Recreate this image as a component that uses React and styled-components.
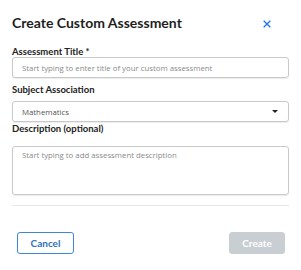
import React from 'react';
import styled, { createGlobalStyle } from 'styled-components';

const GlobalStyle = createGlobalStyle`
  body {
    margin: 0;
    background: #ffffff;
    font-family: Lato, "Liberation Sans", sans-serif;
  }
`

const Card = styled.div`
  width: 301px;
  height: 270px;
  box-sizing: border-box;
  padding: 0 12px;
  background: #fff;
  border-radius: 4px;
`

const Header = styled.div`
  display: flex;
  justify-content: space-between;
  align-items: center;
  height: 47px;
`

const Title = styled.h1`
  margin: 0 0 3px;
  font-size: 14px;
  font-weight: 700;
  color: #1f1f1f;
`

const Close = styled.button`
  border: 0;
  background: none;
  padding: 0;
  margin: 0 18px 0 0;
  display: flex;
  color: #1a73e8;
  cursor: pointer;
`

const Field = styled.div`
  display: flex;
  flex-direction: column;
  margin-top: ${(p) => p.gap || 0}px;
`

const Label = styled.label`
  font-size: 9.5px;
  line-height: 10px;
  font-weight: 700;
  color: #222;
  margin-bottom: ${(p) => p.mb || 0}px;
`

const Input = styled.div`
  box-sizing: border-box;
  height: ${(p) => p.h || 21}px;
  border: 1px solid #c9c9c9;
  border-radius: 3px;
  padding: ${(p) => (p.area ? '3px 9px' : '0 9px')};
  display: flex;
  align-items: ${(p) => (p.area ? 'flex-start' : 'center')};
  justify-content: space-between;
  font-family: "Open Sans", sans-serif;
  font-size: 7.8px;
  color: ${(p) => (p.value ? '#555' : '#8a8a8a')};
  box-shadow: 0 1px 1px rgba(0, 0, 0, 0.08);
`

const Caret = styled.span`
  width: 0;
  height: 0;
  border-left: 3px solid transparent;
  border-right: 3px solid transparent;
  border-top: 3.5px solid #222;
  margin-right: 1px;
`

const Divider = styled.hr`
  border: 0;
  border-top: 1px solid #e6e6e6;
  margin: 10px 0 0;
`

const Footer = styled.div`
  display: flex;
  justify-content: space-between;
  padding: 26px 4px 0 5px;
`

const Button = styled.button`
  box-sizing: border-box;
  width: ${(p) => p.w}px;
  height: 22px;
  border-radius: 3px;
  font-family: Lato, sans-serif;
  font-size: 10px;
  font-weight: 700;
  border: 1px solid ${(p) => (p.primary ? '#c8ced1' : '#3d86d9')};
  background: ${(p) => (p.primary ? '#c8ced1' : '#fff')};
  color: ${(p) => (p.primary ? '#fff' : '#2f6fc2')};
`

export default function App() {
  return (
    <>
      <GlobalStyle />
      <Card>
        <Header>
          <Title>Create Custom Assessment</Title>
          <Close aria-label="close">
            <svg width="8" height="8" viewBox="0 0 8 8">
              <path d="M0.7 0.7L7.3 7.3M7.3 0.7L0.7 7.3" stroke="currentColor" strokeWidth="1.3" />
            </svg>
          </Close>
        </Header>
        <Field>
          <Label>Assessment Title *</Label>
          <Input>Start typing to enter title of your custom assessment</Input>
        </Field>
        <Field gap={7}>
          <Label mb={6}>Subject Association</Label>
          <Input value="1">
            Mathematics
            <Caret />
          </Input>
        </Field>
        <Field gap={2}>
          <Label mb={12}>Description (optional)</Label>
          <Input area h={49}>Start typing to add assessment description</Input>
        </Field>
        <Divider />
        <Footer>
          <Button w={57}>Cancel</Button>
          <Button primary w={56}>Create</Button>
        </Footer>
      </Card>
    </>
  );
}
